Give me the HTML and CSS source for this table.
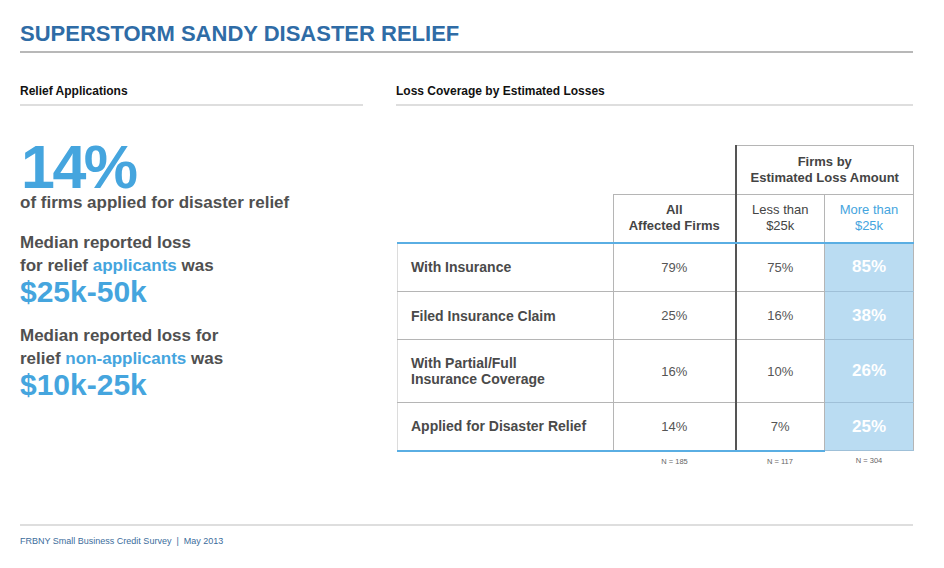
FILE: index.html
```html
<!DOCTYPE html>
<html lang="en">
<head>
<meta charset="utf-8">
<title>Superstorm Sandy Disaster Relief</title>
<link rel="stylesheet" href="styles.css">
</head>
<body>
<div class="page">
  <h1 class="title">SUPERSTORM SANDY DISASTER RELIEF</h1>
  <div class="columns">
    <section class="left">
      <h2 class="section-head">Relief Applications</h2>
      <div class="big">14%</div>
      <div class="lead">of firms applied for disaster relief</div>
      <div class="stat">
        <div class="stat-text">Median reported loss<br>for relief <span class="hl">applicants</span> was</div>
        <div class="stat-value">$25k-50k</div>
      </div>
      <div class="stat">
        <div class="stat-text">Median reported loss for<br>relief <span class="hl">non-applicants</span> was</div>
        <div class="stat-value">$10k-25k</div>
      </div>
    </section>
    <section class="right">
      <h2 class="section-head">Loss Coverage by Estimated Losses</h2>
      <table class="grid">
        <colgroup>
          <col class="c-label">
          <col class="c-all">
          <col class="c-less">
          <col class="c-more">
        </colgroup>
        <thead>
          <tr class="h1">
            <th class="blank" colspan="2"></th>
            <th class="group" colspan="2">Firms by<br>Estimated Loss Amount</th>
          </tr>
          <tr class="h2">
            <th class="blank-label"></th>
            <th class="all">All<br>Affected Firms</th>
            <th class="less">Less than<br>$25k</th>
            <th class="more">More than<br>$25k</th>
          </tr>
        </thead>
        <tbody>
          <tr class="r49">
            <td class="label">With Insurance</td>
            <td class="val">79%</td>
            <td class="val less">75%</td>
            <td class="val more">85%</td>
          </tr>
          <tr class="r48">
            <td class="label">Filed Insurance Claim</td>
            <td class="val">25%</td>
            <td class="val less">16%</td>
            <td class="val more">38%</td>
          </tr>
          <tr class="r63">
            <td class="label">With Partial/Full<br>Insurance Coverage</td>
            <td class="val">16%</td>
            <td class="val less">10%</td>
            <td class="val more">26%</td>
          </tr>
          <tr class="r48 last">
            <td class="label">Applied for Disaster Relief</td>
            <td class="val">14%</td>
            <td class="val less">7%</td>
            <td class="val more">25%</td>
          </tr>
        </tbody>
        <tfoot>
          <tr class="n-row">
            <td></td>
            <td>N = 185</td>
            <td>N = 117</td>
            <td>N = 304</td>
          </tr>
        </tfoot>
      </table>
    </section>
  </div>
  <footer class="footer">FRBNY Small Business Credit Survey &nbsp;|&nbsp; May 2013</footer>
</div>
</body>
</html>
```
FILE: styles.css
```css
* { box-sizing: border-box; }

html, body {
  margin: 0;
  padding: 0;
  background: #ffffff;
}

body {
  font-family: "Liberation Sans", Arial, sans-serif;
  color: #505050;
}

.page {
  width: 944px;
  height: 568px;
  padding: 0 31px 21px 20px;
  display: flex;
  flex-direction: column;
}

.title {
  margin: 0;
  padding: 20px 0 3px;
  font-size: 22px;
  line-height: 28px;
  font-weight: bold;
  color: #2f6ca6;
  border-bottom: 2px solid #b8b8b8;
}

.columns {
  display: grid;
  grid-template-columns: 343px 517px;
  column-gap: 33px;
  margin-top: 31px;
}

.section-head {
  margin: 0;
  padding-bottom: 6px;
  font-size: 12px;
  line-height: 14px;
  font-weight: bold;
  color: #111111;
  border-bottom: 2px solid #dedede;
}

.big {
  margin-top: 36px;
  padding-left: 1px;
  font-size: 61px;
  line-height: 50px;
  font-weight: bold;
  letter-spacing: -2.5px;
  color: #45a5de;
}

.lead {
  font-size: 17px;
  line-height: 22px;
  font-weight: bold;
  color: #505050;
}

.stat {
  margin-top: 17px;
}

.stat-text {
  font-size: 17px;
  line-height: 23px;
  font-weight: bold;
  color: #505050;
}

.hl {
  color: #45a5de;
}

.stat-value {
  font-size: 30px;
  line-height: 30px;
  font-weight: bold;
  color: #45a5de;
}

/* table */
.grid {
  margin: 39px 0 0 1px;
  width: 516px;
  border-collapse: collapse;
  table-layout: fixed;
}

.c-label { width: 216px; }
.c-all { width: 122px; }
.c-less { width: 89px; }
.c-more { width: 89px; }

.grid th,
.grid td {
  padding: 0;
  text-align: center;
  vertical-align: middle;
}

.grid th {
  font-size: 13px;
  line-height: 16px;
  color: #444444;
}

.h1 { height: 49px; }
.h2 { height: 48px; }

.group {
  font-weight: bold;
  border-top: 1px solid #b5b5b5;
  border-right: 1px solid #b5b5b5;
  border-left: 2px solid #555555;
  border-bottom: 1px solid #b5b5b5;
}

.blank-label {
  border-bottom: 2px solid #5aaee3;
}

.h2 th.all {
  font-weight: bold;
  border-top: 1px solid #b5b5b5;
  border-left: 1px solid #b5b5b5;
  border-bottom: 2px solid #5aaee3;
}

.h2 th.less {
  font-weight: normal;
  border-left: 2px solid #555555;
  border-right: 1px solid #b5b5b5;
  border-bottom: 2px solid #5aaee3;
}

.h2 th.more {
  font-weight: normal;
  color: #45a5de;
  border-right: 1px solid #b5b5b5;
  border-bottom: 2px solid #5aaee3;
}

.r49 { height: 49px; }
.r48 { height: 48px; }
.r63 { height: 63px; }

.grid td.label {
  text-align: left;
  padding-left: 13px;
  font-size: 14px;
  line-height: 16px;
  font-weight: bold;
  color: #4a4a4a;
  border-left: 1px solid #dcdcdc;
  border-bottom: 1px solid #b5b5b5;
}

.grid td.val {
  font-size: 13px;
  color: #555555;
  border-left: 1px solid #b5b5b5;
  border-bottom: 1px solid #b5b5b5;
}

.grid td.val.less {
  border-left: 2px solid #555555;
}

.grid td.val.more {
  background: #badcf2;
  color: #ffffff;
  font-size: 17px;
  font-weight: bold;
  border-right: 1px solid #b5b5b5;
  border-bottom: 1px solid #9fc0d8;
}

.grid tr.last td {
  border-bottom: 2px solid #5aaee3;
}

.n-row td {
  height: 20px;
  font-size: 7.5px;
  color: #666666;
  vertical-align: middle;
}

.footer {
  margin-top: auto;
  border-top: 2px solid #dedede;
  padding-top: 10px;
  font-size: 9px;
  line-height: 11px;
  color: #3c6d9c;
}
```
